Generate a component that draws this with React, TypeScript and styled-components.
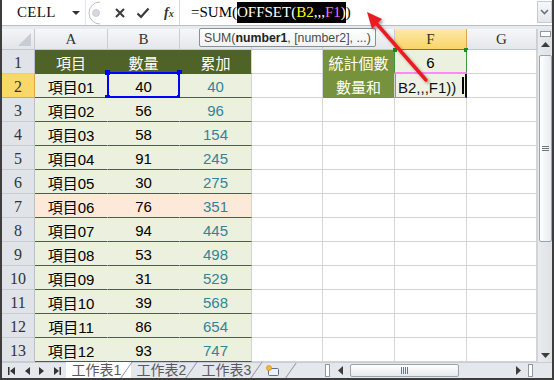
import React from 'react';
import styled, {createGlobalStyle} from 'styled-components';

const GlobalStyle = createGlobalStyle`
    html, body {
        margin: 0;
        padding: 0;
        background: #ffffff;
    }
    * {
        box-sizing: border-box;
    }
`

const CJK = `"Liberation Sans", "Noto Sans CJK TC", sans-serif`;

type Row = [string, number, number];

const rows: Row[] = [
    ['項目01', 40, 40],
    ['項目02', 56, 96],
    ['項目03', 58, 154],
    ['項目04', 91, 245],
    ['項目05', 30, 275],
    ['項目06', 76, 351],
    ['項目07', 94, 445],
    ['項目08', 53, 498],
    ['項目09', 31, 529],
    ['項目10', 39, 568],
    ['項目11', 86, 654],
    ['項目12', 93, 747],
];

const columns = ['A', 'B', 'C', 'D', 'E', 'F', 'G'];

export default function App() {
    return (
        <Frame>
            <GlobalStyle/>
            <FormulaBar>
                <NameBox>
                    <NameText>CELL</NameText>
                    <DropTriangle/>
                </NameBox>
                <Knob>
                    <svg width="14" height="24" viewBox="0 0 14 24">
                        <path d="M12 1 A11 11 0 0 0 12 23" fill="none" stroke="#b9bec6" strokeWidth="1"/>
                        <circle cx="8" cy="12" r="3.5" fill="#d5d9de" stroke="#c3c8ce" strokeWidth="0.8"/>
                    </svg>
                </Knob>
                <IconGroup>
                    <svg width="12" height="12" viewBox="0 0 12 12">
                        <path d="M2 2 L10 10 M10 2 L2 10" stroke="#3a3a3a" strokeWidth="2"/>
                    </svg>
                    <svg width="14" height="12" viewBox="0 0 14 12">
                        <path d="M1.5 6.5 L5 10 L12.5 1.5" fill="none" stroke="#3a3a3a" strokeWidth="2.2"/>
                    </svg>
                    <Fx>f<small>x</small></Fx>
                </IconGroup>
                <FormulaInput>
                    <FormulaText>
                        =SUM(<Hl>OFFSET(<Ref $color="#ffff00">B2</Ref>,,,<Ref $color="#ff66ff">F1</Ref>)</Hl>)
                    </FormulaText>
                </FormulaInput>
                <ExpandButton>
                    <svg width="9" height="6" viewBox="0 0 9 6">
                        <path d="M1 1 L4.5 4.5 L8 1" fill="none" stroke="#6b7280" strokeWidth="1.6"/>
                    </svg>
                </ExpandButton>
            </FormulaBar>
            <Gap/>
            <Middle>
                <Sheet>
                    <Corner>
                        <CornerTriangle/>
                    </Corner>
                    {columns.map(c =>
                        <ColHeader key={c} $selected={c === 'F'}>{c}</ColHeader>
                    )}

                    <RowHeader $selected={false}>1</RowHeader>
                    <Cell $bg="#4f6228" $color="#ffffff" $line="#4f6228" $right="#4f6228">項目</Cell>
                    <Cell $bg="#4f6228" $color="#ffffff" $line="#4f6228" $right="#4f6228">數量</Cell>
                    <Cell $bg="#4f6228" $color="#ffffff" $line="#4f6228">累加</Cell>
                    <Cell/>
                    <Cell $bg="#76923c" $color="#ffffff" $line="#76923c">統計個數</Cell>
                    <Cell $bg="#ebf1de">
                        6
                        <RangeBox/>
                    </Cell>
                    <Cell/>

                    {rows.map(([name, qty, sum], i) => {
                        const bg = i === 5 ? '#fde9d9' : '#ebf1de';
                        const num = i + 2;
                        return (
                            <React.Fragment key={name}>
                                <RowHeader $selected={num === 2}>{num}</RowHeader>
                                <Cell $bg={bg} $line="#4f6228" $right={bg}>{name}</Cell>
                                <Cell $bg={bg} $line="#4f6228" $right={bg}>
                                    {qty}
                                    {num === 2 && <SelectBox>
                                        <Handle $pos="tl"/><Handle $pos="tr"/>
                                        <Handle $pos="bl"/><Handle $pos="br"/>
                                    </SelectBox>}
                                </Cell>
                                <Cell $bg={bg} $line="#4f6228" $color="#31849b">{sum}</Cell>
                                <Cell/>
                                {num === 2
                                    ? <Cell $bg="#76923c" $color="#ffffff" $line="#76923c">數量和</Cell>
                                    : <Cell/>}
                                {num === 2
                                    ? <EditCell>B2,,,F1))<Caret/></EditCell>
                                    : <Cell/>}
                                <Cell/>
                            </React.Fragment>
                        );
                    })}
                </Sheet>
                <VScroll>
                    <SplitBox/>
                    <ArrowButton>
                        <svg width="9" height="5" viewBox="0 0 9 5"><path d="M0 5 L4.5 0 L9 5 Z" fill="#3c3c3c"/></svg>
                    </ArrowButton>
                    <VThumb>
                        <Grip $vertical={true}>
                            <span/><span/><span/>
                        </Grip>
                    </VThumb>
                    <Spacer/>
                    <ArrowButton>
                        <svg width="9" height="5" viewBox="0 0 9 5"><path d="M0 0 L4.5 5 L9 0 Z" fill="#3c3c3c"/></svg>
                    </ArrowButton>
                </VScroll>
            </Middle>
            <BottomBar>
                <TabsArea>
                    <NavGroup>
                        <svg width="7" height="8" viewBox="0 0 7 8"><path d="M0 0 H1.5 V8 H0 Z M7 0 V8 L2 4 Z" fill="#333"/></svg>
                        <svg width="5" height="8" viewBox="0 0 5 8"><path d="M5 0 V8 L0 4 Z" fill="#333"/></svg>
                        <svg width="5" height="8" viewBox="0 0 5 8"><path d="M0 0 V8 L5 4 Z" fill="#333"/></svg>
                        <svg width="7" height="8" viewBox="0 0 7 8"><path d="M0 0 V8 L5 4 Z M5.5 0 H7 V8 H5.5 Z" fill="#333"/></svg>
                    </NavGroup>
                    <Tab $active={true}>工作表1</Tab>
                    <Tab $active={false}>工作表2</Tab>
                    <Tab $active={false}>工作表3</Tab>
                    <NewSheetTab>
                        <svg width="14" height="12" viewBox="0 0 14 12">
                            <rect x="2.5" y="3.5" width="10" height="7" rx="1" fill="#eef3fb" stroke="#5a6f8e"/>
                            <circle cx="3" cy="3" r="2.6" fill="#f7b733" stroke="#d98a1a" strokeWidth="0.6"/>
                        </svg>
                    </NewSheetTab>
                </TabsArea>
                <HScroll>
                    <SplitBar/>
                    <SmallArrow>
                        <svg width="5" height="9" viewBox="0 0 5 9"><path d="M5 0 V9 L0 4.5 Z" fill="#3c3c3c"/></svg>
                    </SmallArrow>
                    <HThumb>
                        <Grip $vertical={false}>
                            <span/><span/><span/><span/>
                        </Grip>
                    </HThumb>
                    <Spacer/>
                    <SmallArrow>
                        <svg width="5" height="9" viewBox="0 0 5 9"><path d="M0 0 V9 L5 4.5 Z" fill="#3c3c3c"/></svg>
                    </SmallArrow>
                    <SplitBar/>
                </HScroll>
                <ScrollCorner/>
            </BottomBar>

            <Tooltip>SUM(<b>number1</b>, [number2], ...)</Tooltip>

            <ArrowLayer width="554" height="380" viewBox="0 0 554 380">
                <defs>
                    <filter id="soft" x="-20%" y="-20%" width="140%" height="140%">
                        <feDropShadow dx="2" dy="2" stdDeviation="1.5" floodColor="#000" floodOpacity="0.35"/>
                    </filter>
                </defs>
                <g filter="url(#soft)">
                    <line x1="426" y1="80" x2="376" y2="23" stroke="#ea1c24" strokeWidth="3.5" strokeLinecap="round"/>
                    <polygon points="367,12 382,19 372,29" fill="#ea1c24"/>
                </g>
            </ArrowLayer>
        </Frame>
    );
}

const Frame = styled.div`
    position: relative;
    width: 554px;
    height: 380px;
    border-left: 2px solid #3d3d3d;
    border-right: 2px solid #3d3d3d;
    border-bottom: 2px solid #3d3d3d;
    background: #ffffff;
    display: flex;
    flex-direction: column;
    overflow: hidden;
`

const FormulaBar = styled.div`
    height: 26px;
    display: flex;
    align-items: stretch;
    background: #ffffff;
    border-bottom: 1px solid #b8bec6;
`

const NameBox = styled.div`
    width: 84px;
    display: flex;
    align-items: center;
    padding-left: 15px;
    border-right: 1px solid #e3e6ea;
`

const NameText = styled.span`
    font-family: "Liberation Serif", serif;
    font-size: 15px;
    letter-spacing: 0.3px;
    color: #111;
    flex: 1;
`

const DropTriangle = styled.span`
    width: 0;
    height: 0;
    margin-right: 5px;
    border-left: 4px solid transparent;
    border-right: 4px solid transparent;
    border-top: 4px solid #333;
`

const Knob = styled.div`
    width: 18px;
    display: flex;
    align-items: center;
    padding-left: 2px;
`

const IconGroup = styled.div`
    width: 76px;
    display: flex;
    align-items: center;
    gap: 10px;
    padding-left: 10px;
    border-right: 1px solid #d4d8dd;
`

const Fx = styled.span`
    font-family: "Liberation Serif", serif;
    font-style: italic;
    font-weight: bold;
    font-size: 14px;
    color: #333;
    margin-left: 4px;

    small {
        font-size: 10px;
    }
`

const FormulaInput = styled.div`
    flex: 1;
    display: flex;
    align-items: center;
    padding-left: 11px;
`

const FormulaText = styled.div`
    font-family: "Liberation Serif", serif;
    font-size: 15px;
    color: #000;
    white-space: pre;
`

const Hl = styled.span`
    background: #000;
    color: #fff;
    padding: 2px 0 3px;
`

const Ref = styled.span<{ $color: string }>`
    color: ${({$color}) => $color};
`

const ExpandButton = styled.div`
    width: 15px;
    margin: 1px 0 2px;
    display: flex;
    align-items: center;
    justify-content: center;
    background: linear-gradient(#f6f7f9, #e4e7eb);
    border: 1px solid #c6cbd2;
`

const Gap = styled.div`
    height: 3px;
    background: #e7eaee;
`

const Middle = styled.div`
    display: flex;
    height: 333px;
`

const Sheet = styled.div`
    display: grid;
    grid-template-columns: 33px 73px 72px 72px 71px 72px 72px 70px;
    grid-template-rows: 21px repeat(13, 24px);
    width: 535px;
`

const Corner = styled.div`
    background: linear-gradient(#f3f4f6, #e2e5e9);
    border-right: 1px solid #c2c8d0;
    border-bottom: 1px solid #c2c8d0;
    display: flex;
    align-items: flex-end;
    justify-content: flex-end;
    padding: 0 3px 3px 0;
`

const CornerTriangle = styled.span`
    width: 0;
    height: 0;
    border-left: 13px solid transparent;
    border-bottom: 13px solid #c8cdd4;
`

const ColHeader = styled.div<{ $selected: boolean }>`
    display: flex;
    align-items: center;
    justify-content: center;
    font-family: "Liberation Serif", serif;
    font-size: 15px;
    color: #333;
    border-right: 1px solid ${({$selected}) => $selected ? '#e0a34a' : '#c9ced5'};
    border-bottom: 1px solid ${({$selected}) => $selected ? '#d9912f' : '#c2c8d0'};
    background: ${({$selected}) => $selected
            ? 'linear-gradient(#fde9a8, #f9d468)'
            : 'linear-gradient(#f6f7f9, #e4e7eb)'};
`

const RowHeader = styled.div<{ $selected: boolean }>`
    display: flex;
    align-items: center;
    justify-content: center;
    padding-top: 3px;
    font-family: "Liberation Serif", serif;
    font-size: 16px;
    color: #333;
    border-right: 1px solid ${({$selected}) => $selected ? '#e0a34a' : '#b9c0c9'};
    border-bottom: 1px solid ${({$selected}) => $selected ? '#e0a34a' : '#c6ccd3'};
    background: ${({$selected}) => $selected ? '#f9d868' : '#e0e3e8'};
`

const Cell = styled.div<{ $bg?: string; $color?: string; $line?: string; $right?: string }>`
    position: relative;
    display: flex;
    align-items: center;
    justify-content: center;
    padding-top: 2px;
    font-family: ${CJK};
    font-size: 15px;
    color: ${({$color}) => $color || '#000'};
    background: ${({$bg}) => $bg || '#ffffff'};
    border-right: 1px solid ${({$right}) => $right || '#d4d4d4'};
    border-bottom: 1px solid ${({$line}) => $line || '#d4d4d4'};
`

const RangeBox = styled.div`
    position: absolute;
    inset: -1px -1px -1px -1px;
    border: 1px solid #3a9a3a;
    border-bottom: 2px solid #ff88ff;

    &::before, &::after {
        content: '';
        position: absolute;
        top: -2px;
        width: 4px;
        height: 4px;
        background: #1d8a1d;
    }

    &::before {
        left: -2px;
    }

    &::after {
        right: -2px;
    }
`

const SelectBox = styled.div`
    position: absolute;
    inset: -2px -1px -1px -1px;
    border: 2px solid #0000ff;
`

const Handle = styled.span<{ $pos: 'tl' | 'tr' | 'bl' | 'br' }>`
    position: absolute;
    width: 5px;
    height: 5px;
    background: #0000ff;
    ${({$pos}) => $pos[0] === 't' ? 'top: -4px;' : 'bottom: -4px;'}
    ${({$pos}) => $pos[1] === 'l' ? 'left: -4px;' : 'right: -4px;'}
`

const EditCell = styled.div`
    position: relative;
    display: flex;
    align-items: center;
    padding: 3px 0 0 2px;
    font-family: "Liberation Sans", sans-serif;
    font-size: 15px;
    color: #111;
    background: #eef2e5;
    border-left: 1px solid #9a7fd4;
    border-bottom: 1px solid #9a7fd4;
    border-right: 2px solid #111;
    white-space: nowrap;
    overflow: hidden;
`

const Caret = styled.span`
    position: absolute;
    right: 1px;
    top: 3px;
    width: 2px;
    height: 17px;
    background: #000;
`

const VScroll = styled.div`
    width: 15px;
    display: flex;
    flex-direction: column;
    align-items: center;
    background: linear-gradient(90deg, #e9ebee, #dfe2e6);
    border-left: 1px solid #d0d4da;
`

const SplitBox = styled.div`
    width: 11px;
    height: 6px;
    margin-top: 2px;
    border: 1px solid #8f98a3;
    background: #fff;
`

const ArrowButton = styled.div`
    width: 13px;
    height: 14px;
    display: flex;
    align-items: center;
    justify-content: center;
`

const VThumb = styled.div`
    width: 13px;
    height: 187px;
    margin-top: 4px;
    border: 1px solid #9aa3ae;
    border-radius: 2px;
    background: linear-gradient(90deg, #ffffff, #e8ebef);
    display: flex;
    align-items: center;
    justify-content: center;
`

const Grip = styled.div<{ $vertical: boolean }>`
    display: flex;
    flex-direction: ${({$vertical}) => $vertical ? 'column' : 'row'};
    gap: 1px;

    span {
        display: block;
        width: ${({$vertical}) => $vertical ? '7px' : '1px'};
        height: ${({$vertical}) => $vertical ? '1px' : '7px'};
        background: #6d7680;
    }
`

const Spacer = styled.div`
    flex: 1;
`

const BottomBar = styled.div`
    height: 16px;
    display: flex;
    background: #e4e7eb;
    border-top: 1px solid #c8cdd4;
`

const TabsArea = styled.div`
    width: 321px;
    display: flex;
    align-items: stretch;
`

const NavGroup = styled.div`
    width: 64px;
    display: flex;
    align-items: center;
    justify-content: space-between;
    padding: 0 5px 0 6px;
`

const Tab = styled.div<{ $active: boolean }>`
    position: relative;
    width: 65px;
    display: flex;
    align-items: center;
    justify-content: center;
    padding-right: 4px;
    font-family: ${CJK};
    font-size: 14px;
    line-height: 15px;
    color: #5a5a5a;
    background: ${({$active}) => $active ? '#ffffff' : 'transparent'};
    margin-top: -1px;

    &::after {
        content: '';
        position: absolute;
        right: 4px;
        top: 0;
        width: 1px;
        height: 16px;
        background: #8c939c;
        transform: skewX(-35deg);
    }
`

const NewSheetTab = styled.div`
    position: relative;
    width: 40px;
    display: flex;
    align-items: center;
    padding-left: 5px;

    &::after {
        content: '';
        position: absolute;
        right: 10px;
        top: 0;
        width: 1px;
        height: 16px;
        background: #8c939c;
        transform: skewX(-35deg);
    }
`

const HScroll = styled.div`
    flex: 1;
    display: flex;
    align-items: center;
    padding: 0 4px 0 2px;
    gap: 6px;
`

const SplitBar = styled.div`
    width: 5px;
    height: 13px;
    border: 1px solid #8f98a3;
    background: #fff;
`

const SmallArrow = styled.div`
    width: 8px;
    display: flex;
    justify-content: center;
`

const HThumb = styled.div`
    width: 109px;
    height: 13px;
    border: 1px solid #9aa3ae;
    border-radius: 2px;
    background: linear-gradient(#ffffff, #e6e9ed);
    display: flex;
    align-items: center;
    justify-content: center;
`

const ScrollCorner = styled.div`
    width: 15px;
    background: #e4e7eb;
`

const Tooltip = styled.div`
    position: absolute;
    left: 197px;
    top: 28px;
    height: 19px;
    padding: 0 4px;
    display: flex;
    align-items: center;
    font-family: "Liberation Sans", sans-serif;
    font-size: 12.3px;
    color: #4a4a4a;
    background: linear-gradient(#ffffff, #f1f2f4);
    border: 1px solid #8a8f96;
    border-radius: 2px;
    white-space: nowrap;

    b {
        color: #222;
    }
`

const ArrowLayer = styled.svg`
    position: absolute;
    left: -2px;
    top: 0;
    pointer-events: none;
`
